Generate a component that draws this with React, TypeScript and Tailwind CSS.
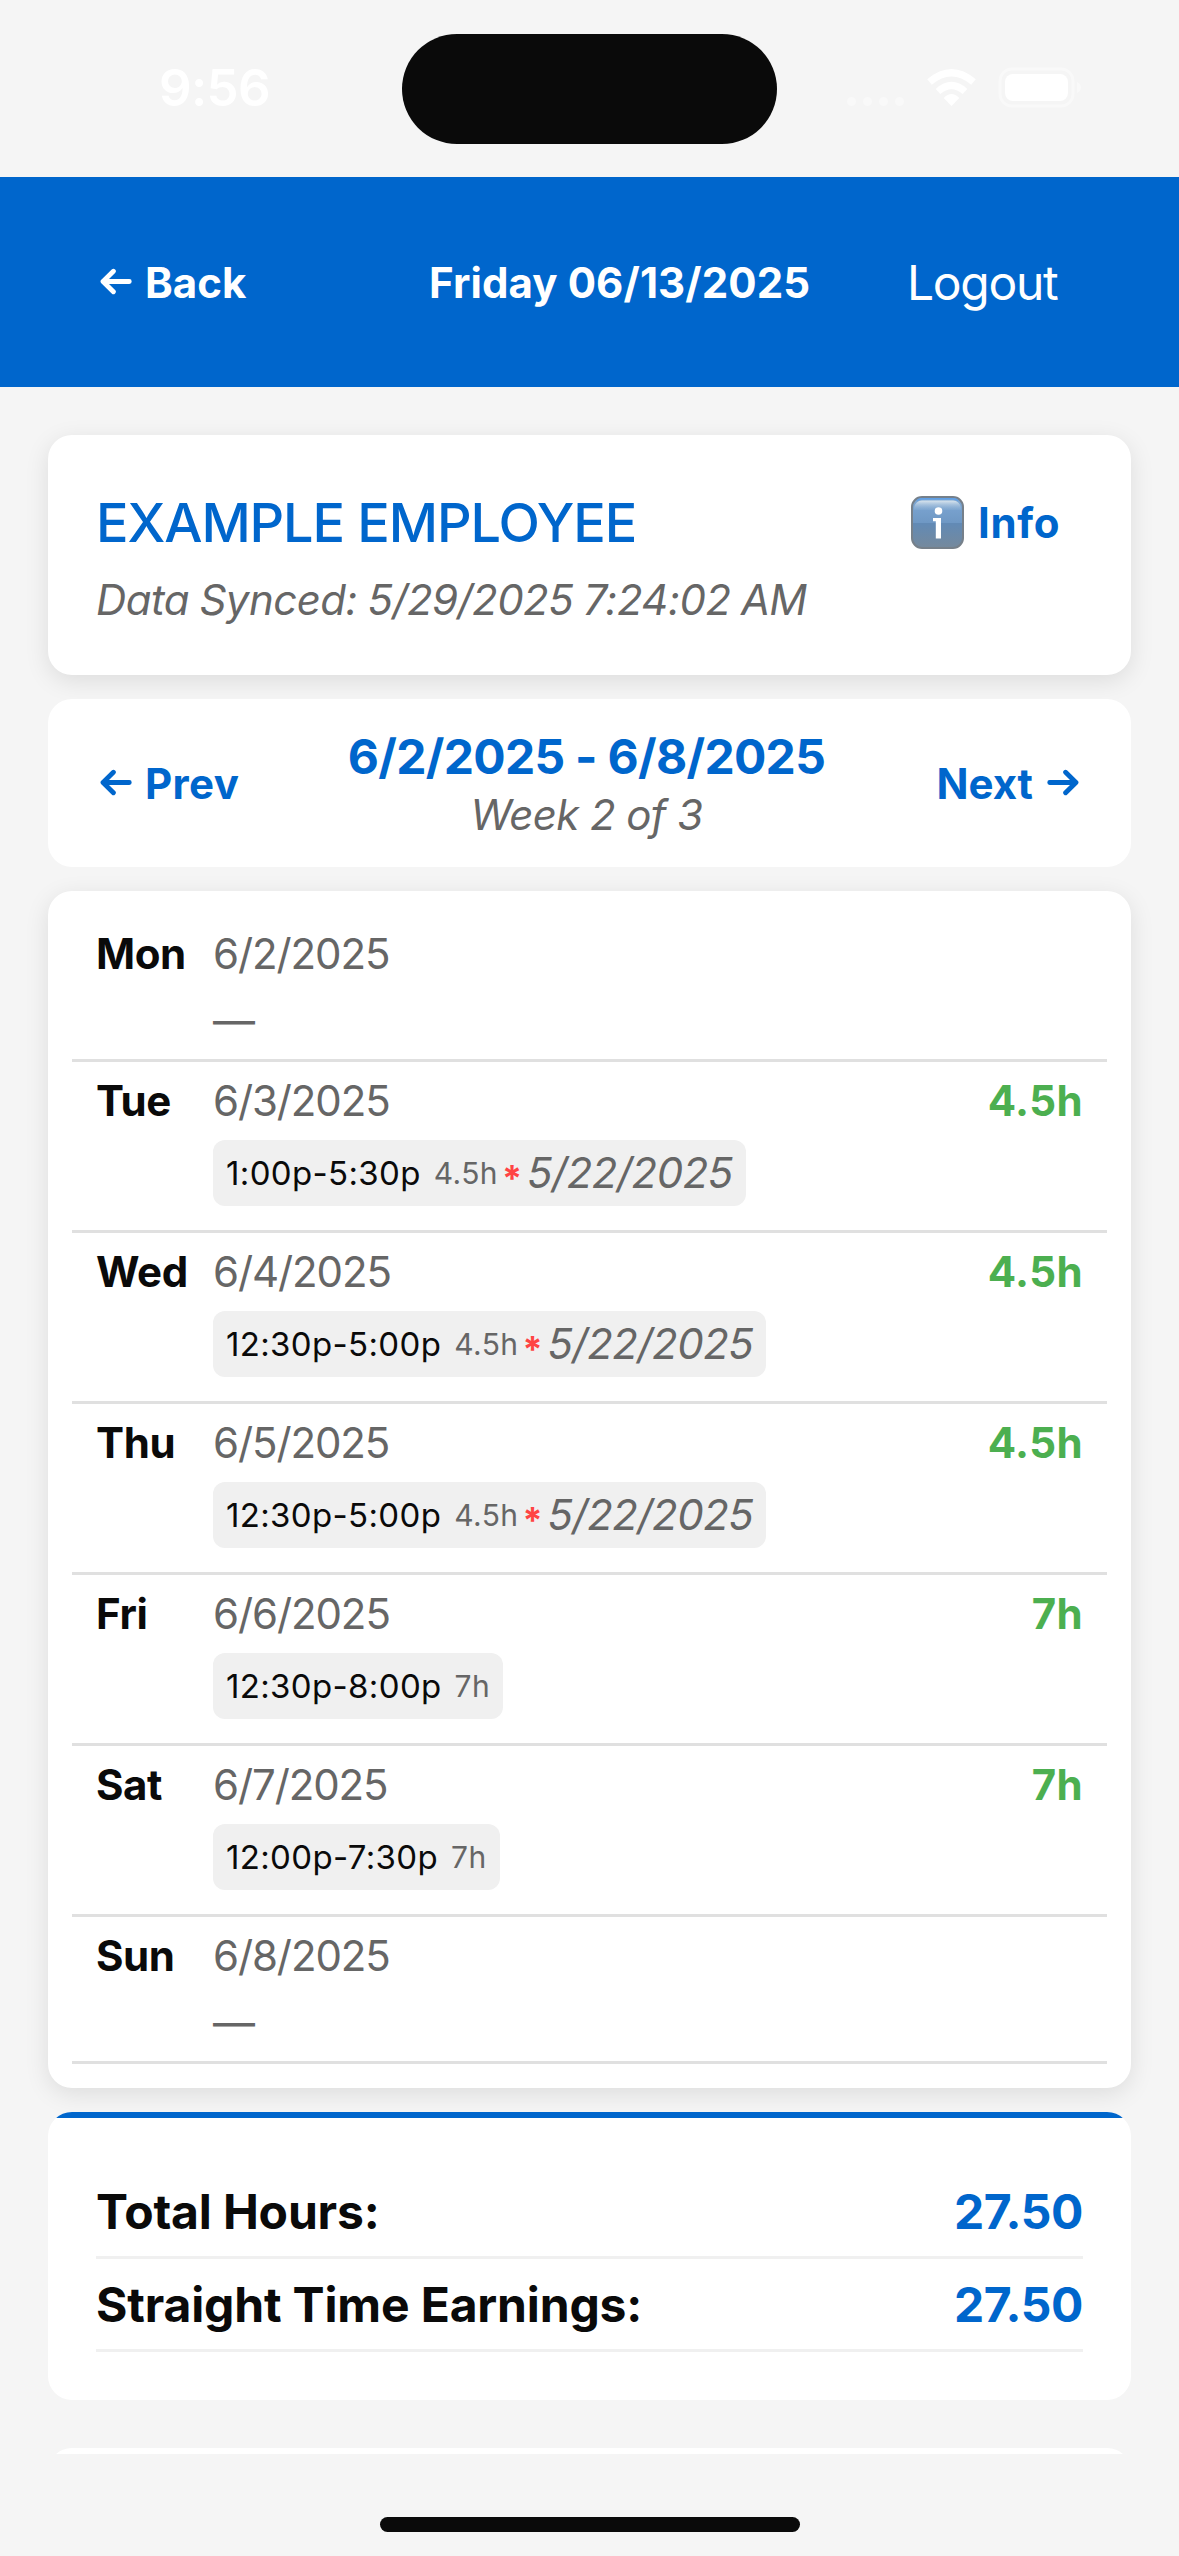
import React from "react";

type Shift = { time: string; hours: string; posted?: string };
type Day = { name: string; date: string; total?: string; shift?: Shift };

const days: Day[] = [
  { name: "Mon", date: "6/2/2025" },
  { name: "Tue", date: "6/3/2025", total: "4.5h", shift: { time: "1:00p-5:30p", hours: "4.5h", posted: "5/22/2025" } },
  { name: "Wed", date: "6/4/2025", total: "4.5h", shift: { time: "12:30p-5:00p", hours: "4.5h", posted: "5/22/2025" } },
  { name: "Thu", date: "6/5/2025", total: "4.5h", shift: { time: "12:30p-5:00p", hours: "4.5h", posted: "5/22/2025" } },
  { name: "Fri", date: "6/6/2025", total: "7h", shift: { time: "12:30p-8:00p", hours: "7h" } },
  { name: "Sat", date: "6/7/2025", total: "7h", shift: { time: "12:00p-7:30p", hours: "7h" } },
  { name: "Sun", date: "6/8/2025" },
];

const totals = [
  { label: "Total Hours:", value: "27.50" },
  { label: "Straight Time Earnings:", value: "27.50" },
];

function Arrow({ flip = false }: { flip?: boolean }) {
  return (
    <svg
      width="32"
      height="28"
      viewBox="0 0 32 28"
      fill="none"
      stroke="currentColor"
      strokeWidth="4.8"
      strokeLinecap="round"
      strokeLinejoin="round"
      className={flip ? "shrink-0 -scale-x-100" : "shrink-0"}
    >
      <path d="M29.3 13.500H3.2M13.400 3.200L3 13.500l10.400 10.300" />
    </svg>
  );
}

function InfoIcon() {
  return (
    <svg width="53" height="53" viewBox="0 0 53 53" className="shrink-0">
      <defs>
        <linearGradient id="tile" x1="0" y1="0" x2="0" y2="1">
          <stop offset="0" stopColor="#7fa9d6" />
          <stop offset="0.5" stopColor="#6f98c4" />
          <stop offset="0.52" stopColor="#628ab5" />
          <stop offset="1" stopColor="#75899c" />
        </linearGradient>
        <linearGradient id="gloss" x1="0" y1="0" x2="0" y2="1">
          <stop offset="0" stopColor="#dbe6ee" />
          <stop offset="1" stopColor="#93b4d6" stopOpacity="0.25" />
        </linearGradient>
      </defs>
      <rect x="1" y="1" width="51" height="51" rx="10" fill="url(#tile)" stroke="#76808a" strokeWidth="2" />
      <path d="M3 14v-2a8 8 0 0 1 8-7.500h31a8 8 0 0 1 8 7.500v2z" fill="url(#gloss)" />
      <path d="M6 4.500Q8 2.800 11 2.800h31q3 0 5 1.700" fill="none" stroke="#5f9fe6" strokeWidth="1.500" />
      <circle cx="27.500" cy="15" r="3.800" fill="#fff" />
      <path d="M22 22h8v20.500h-5.200V25.200H22z" fill="#fff" />
    </svg>
  );
}

function StatusBar() {
  return (
    <div className="flex h-[177px] w-full items-start">
      <div className="w-[402px] pt-[58px] pl-[159px] text-[51px] leading-[60px] font-semibold tracking-[-0.65px] text-white">
        9:56
      </div>
      <div className="mt-[34px] h-[110px] w-[375px] rounded-full bg-[#0a0a0a]" />
      <svg width="250" height="60" viewBox="840 60 250 60" className="mt-[60px] ml-[63px]" fill="#fff">
        {[851.5, 867.5, 883.5, 899.5].map((x) => (
          <circle key={x} cx={x} cy="101.500" r="4.500" opacity="0.400" />
        ))}
        <path d="M951.500 106l-7.800-8q7.800-8 15.600 0z" />
        <path d="M938 91.500q13.500-12 27 0" fill="none" stroke="#fff" strokeWidth="7" />
        <path d="M929.500 82q22-18.500 44 0" fill="none" stroke="#fff" strokeWidth="7" />
        <rect x="1000" y="69" width="73" height="37" rx="12" fill="none" stroke="#fff" strokeWidth="3" opacity="0.400" />
        <rect x="1005" y="74" width="63" height="27" rx="8" />
        <path d="M1077 82q4 1.500 4 5.500t-4 5.500z" opacity="0.400" />
      </svg>
    </div>
  );
}

function ShiftChip({ shift }: { shift: Shift }) {
  return (
    <div className="mt-[15px] flex h-[66px] w-fit items-center rounded-xl bg-[#f0f0f0] pr-[13px] pl-[13px] whitespace-nowrap">
      <span className="text-[33px] tracking-[0.35px] text-[#0a0a0a]">{shift.time}</span>
      <span className="ml-[13px] text-[30px] tracking-[0.4px] text-[#666]">{shift.hours}</span>
      {shift.posted && (
        <>
          <span className="mt-[9px] ml-[4px] text-[36px] leading-none font-bold text-[#ff4444]">*</span>
          <span className="ml-[5px] text-[42px] tracking-[-0.5px] text-[#666] italic">{shift.posted}</span>
        </>
      )}
    </div>
  );
}

function DayRow({ day }: { day: Day }) {
  return (
    <div
      className={`flex border-b-[3px] border-[#e0e0e0] px-6 pt-[15px] text-[42px] leading-[48px] ${
        day.shift ? "h-[171px]" : "h-[147px]"
      }`}
    >
      <div className="w-[117px] shrink-0 font-[650] tracking-[-0.4px] text-[#0a0a0a]">{day.name}</div>
      <div className="flex-1 text-[#666]">
        <div className="tracking-[-1.1px]">{day.date}</div>
        {day.shift ? <ShiftChip shift={day.shift} /> : <div className="mt-[19px]">—</div>}
      </div>
      {day.total && <div className="font-[650] tracking-[0.4px] text-[#4caf50]">{day.total}</div>}
    </div>
  );
}

export default function App() {
  return (
    <div className="flex h-[2556px] w-[1179px] flex-col overflow-hidden bg-[#f5f5f5] font-['Inter',sans-serif]">
      <StatusBar />

      <header className="flex h-[210px] shrink-0 items-center bg-[#0066cc] pl-[100px] text-[42px] font-[650] whitespace-nowrap text-white">
        <div className="flex w-[329px] items-center gap-[13px]">
          <Arrow />
          <span>Back</span>
        </div>
        <div className="flex-1 tracking-[0.1px]">Friday 06/13/2025</div>
        <div className="w-[272px] pt-[2px] text-[48px] font-normal tracking-[-1.3px]">Logout</div>
      </header>

      <main className="flex h-[2067px] shrink-0 flex-col overflow-hidden px-12 pt-12">
        <section className="h-[240px] shrink-0 rounded-3xl bg-white px-12 pt-[55px] shadow-[0_6px_24px_rgba(0,0,0,0.1)]">
          <div className="flex h-16 items-center justify-between text-[#0066cc]">
            <h1 className="text-[54px] font-medium tracking-[-1.1px]">EXAMPLE EMPLOYEE</h1>
            <div className="flex w-[172px] items-center gap-[14px] text-[42px] font-[650] tracking-[0.7px]">
              <InfoIcon />
              Info
            </div>
          </div>
          <p className="mt-[22px] text-[42px] leading-[48px] tracking-[-0.55px] text-[#666] italic [word-spacing:-0.8px]">
            Data Synced: 5/29/2025 7:24:02 AM
          </p>
        </section>

        <section className="mt-6 flex h-[168px] shrink-0 items-center rounded-3xl bg-white px-[52px] text-[42px] font-[650] whitespace-nowrap text-[#0066cc]">
          <div className="flex w-[195px] items-center gap-[13px]">
            <Arrow />
            <span className="tracking-[0.4px]">Prev</span>
          </div>
          <div className="flex flex-1 flex-col items-center">
            <div className="text-[48px] leading-[57px] font-bold tracking-[-0.7px]">6/2/2025 - 6/8/2025</div>
            <div className="mt-[6px] leading-[48px] font-normal tracking-[-0.6px] text-[#666] italic">Week 2 of 3</div>
          </div>
          <div className="flex w-[201px] items-center justify-end gap-[14px]">
            <span>Next</span>
            <Arrow flip />
          </div>
        </section>

        <section className="mt-6 h-[1197px] shrink-0 rounded-3xl bg-white p-6 shadow-[0_6px_24px_rgba(0,0,0,0.1)]">
          {days.map((day) => (
            <DayRow key={day.name} day={day} />
          ))}
        </section>

        <section className="mt-6 h-[288px] shrink-0 overflow-hidden rounded-3xl bg-white">
          <div className="h-1.5 bg-[#0066cc]" />
          <div className="px-12 pt-12 text-[48px]">
            {totals.map((row) => (
              <div
                key={row.label}
                className="flex h-[93px] items-center justify-between border-b-[3px] border-[#f0f0f0] pt-[2px]"
              >
                <span className="font-[650] tracking-[-0.15px] text-[#0a0a0a]">{row.label}</span>
                <span className="font-bold tracking-[-0.39px] text-[#0066cc]">{row.value}</span>
              </div>
            ))}
          </div>
        </section>

        <section className="mt-12 h-[120px] shrink-0 rounded-3xl bg-white" />
      </main>

      <div className="mx-auto mt-[63px] h-[15px] w-[420px] shrink-0 rounded-full bg-[#0a0a0a]" />
    </div>
  );
}
